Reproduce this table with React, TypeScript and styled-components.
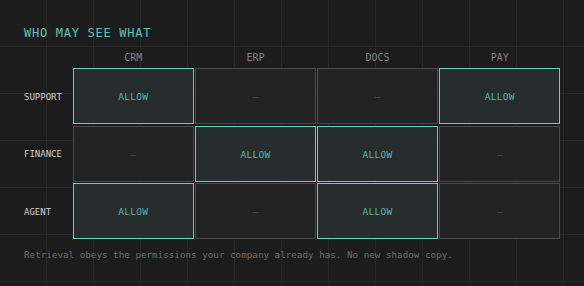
import React from "react";
import styled, { createGlobalStyle } from "styled-components";

const Global = createGlobalStyle`
  html, body { margin: 0; padding: 0; }
  body {
    background-color: #1c1c1c;
    background-image:
      linear-gradient(to right, #282828 1px, transparent 1px),
      linear-gradient(to bottom, #282828 1px, transparent 1px);
    background-size: 47px 47px;
    background-position: -1px -1px;
    min-height: 100vh;
    font-family: "DejaVu Sans Mono", "Liberation Mono", monospace;
  }
`;

const Page = styled.div`
  padding: 26px 24px 0;
  box-sizing: border-box;
  width: 584px;
`;

const Title = styled.h2`
  margin: 0;
  font-weight: 400;
  font-size: 12px;
  line-height: 14px;
  letter-spacing: 0.72px;
  color: #5fc6b6;
`;

const Matrix = styled.div`
  margin-top: 10.5px;
  display: grid;
  grid-template-columns: 47.5px repeat(4, 1fr);
  grid-template-rows: 16px repeat(3, 56px);
  gap: 1.5px;
`;

const ColHead = styled.div`
  padding-top: 1px;
  font-size: 10px;
  line-height: 12px;
  color: #828282;
  text-align: center;
`;

const RowHead = styled.div`
  display: flex;
  align-items: center;
  padding-top: 1px;
  font-size: 9px;
  color: #d0d0d0;
`;

const Cell = styled.div<{ $allow: boolean }>`
  box-sizing: border-box;
  display: flex;
  align-items: center;
  justify-content: center;
  padding-top: 1px;
  border: 1px solid ${(p) => (p.$allow ? "#5fd4c0" : "#4b4b4b")};
  background: ${(p) => (p.$allow ? "#272d2d" : "#222222")};
  color: ${(p) => (p.$allow ? "#5ab6a7" : "#4a4a4a")};
  font-size: ${(p) => (p.$allow ? "9.5px" : "10px")};
  letter-spacing: ${(p) => (p.$allow ? "0.3px" : "0")};
`;

const Footer = styled.p`
  margin: 10px 0 0;
  font-size: 9.25px;
  line-height: 12px;
  color: #6c6c6c;
  white-space: nowrap;
`;

const cols = ["CRM", "ERP", "DOCS", "PAY"];
const rows: { name: string; allow: boolean[] }[] = [
  { name: "SUPPORT", allow: [true, false, false, true] },
  { name: "FINANCE", allow: [false, true, true, false] },
  { name: "AGENT", allow: [true, false, true, false] },
];

export default function App() {
  return (
    <>
      <Global />
      <Page>
        <Title>WHO MAY SEE WHAT</Title>
        <Matrix>
          <div />
          {cols.map((c) => (
            <ColHead key={c}>{c}</ColHead>
          ))}
          {rows.map((r) => (
            <React.Fragment key={r.name}>
              <RowHead>{r.name}</RowHead>
              {r.allow.map((a, i) => (
                <Cell key={i} $allow={a}>
                  {a ? "ALLOW" : "—"}
                </Cell>
              ))}
            </React.Fragment>
          ))}
        </Matrix>
        <Footer>
          Retrieval obeys the permissions your company already has. No new shadow copy.
        </Footer>
      </Page>
    </>
  );
}
